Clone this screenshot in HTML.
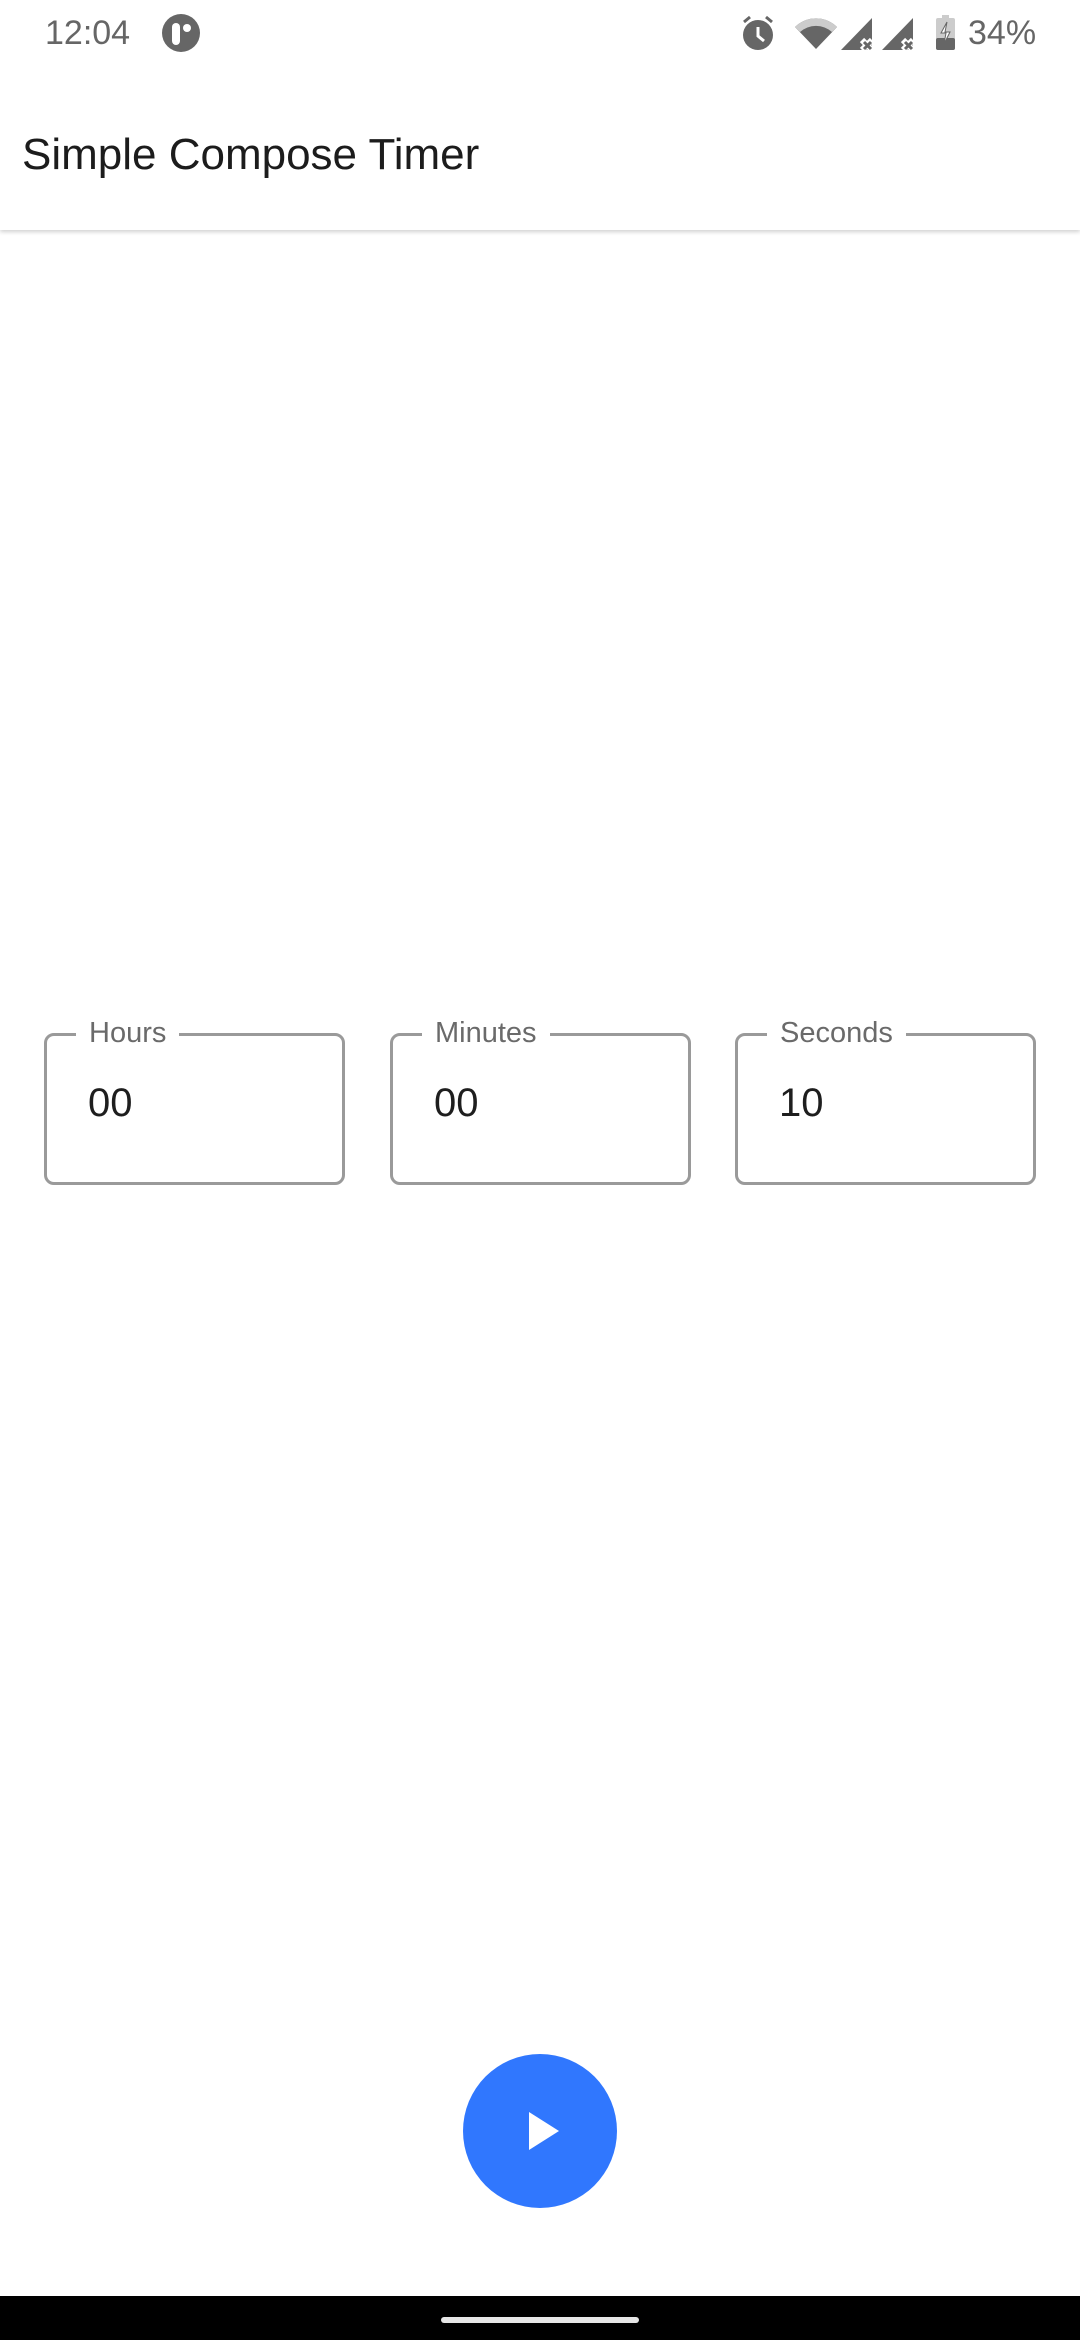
<!DOCTYPE html>
<html><head><meta charset="utf-8"><style>
html,body{margin:0;padding:0;width:1080px;height:2340px;background:#fff;overflow:hidden;font-family:"Liberation Sans",sans-serif;position:relative}
.abs{position:absolute}
.st{color:#666;font-size:34px;top:15px;line-height:36px}
.bar{top:0;left:0;width:1080px;height:230px;background:#fff;box-shadow:0 2px 4px rgba(0,0,0,.18)}
.title{left:22px;top:130px;font-size:44px;color:#1c1c1c;line-height:50px}
.box{top:1033px;width:295px;height:146px;border:3px solid #9a9a9a;border-radius:10px}
.lbl{top:-21px;left:29px;background:#fff;padding:0 13px;font-size:29px;color:#6a6a6a;line-height:36px}
.val{top:44px;left:41px;font-size:40px;color:#1e1e1e;line-height:46px}
</style></head><body>
<div class="abs bar"></div>
<div class="abs st" style="left:45px">12:04</div>
<svg class="abs" style="left:162px;top:14px" width="38" height="38" viewBox="0 0 38 38"><circle cx="19" cy="19" r="19" fill="#666"/><rect x="10" y="9" width="8" height="22" rx="4" fill="#fff"/><circle cx="25" cy="14" r="4" fill="#fff"/></svg>
<svg class="abs" style="left:740px;top:14px" width="300" height="40" viewBox="740 14 300 40">
<circle cx="758" cy="35" r="15" fill="#666"/><path d="M758 27v9l6 5" stroke="#fff" stroke-width="3" fill="none"/><path d="M744 22l6-5M772 22l-6-5" stroke="#666" stroke-width="3"/>
<path d="M795 27a30 30 0 0 1 42 0l-21 22z" fill="#666"/><path d="M795 27a30 30 0 0 1 42 0l-5 5a24 24 0 0 0-32 0z" fill="#ccc"/>
<path d="M841 50l31-32v32z" fill="#666"/><path d="M862 40l10 10M872 40l-10 10" stroke="#fff" stroke-width="6"/><path d="M864 42l7 7M871 42l-7 7" stroke="#666" stroke-width="3"/>
<path d="M882 50l31-32v32z" fill="#666"/><path d="M903 40l10 10M913 40l-10 10" stroke="#fff" stroke-width="6"/><path d="M905 42l7 7M912 42l-7 7" stroke="#666" stroke-width="3"/>
<rect x="936" y="18" width="19" height="32" rx="2" fill="#ccc"/><rect x="942" y="15" width="7" height="4" fill="#ccc"/><rect x="936" y="38" width="19" height="12" rx="2" fill="#666"/><path d="M947 22l-6 11h5l-2 11 6-12h-5z" fill="#fff" stroke="#666" stroke-width="1"/>
</svg>
<div class="abs st" style="left:968px">34%</div>
<div class="abs title">Simple Compose Timer</div>
<div class="abs box" style="left:44px"><div class="abs lbl">Hours</div><div class="abs val">00</div></div>
<div class="abs box" style="left:390px"><div class="abs lbl">Minutes</div><div class="abs val">00</div></div>
<div class="abs box" style="left:735px"><div class="abs lbl">Seconds</div><div class="abs val">10</div></div>
<div class="abs" style="left:463px;top:2054px;width:154px;height:154px;border-radius:50%;background:#3077fe"></div>
<svg class="abs" style="left:529px;top:2112px" width="31" height="38" viewBox="0 0 31 38"><path d="M0 0L30 19L0 38z" fill="#fff"/></svg>
<div class="abs" style="left:0;top:2296px;width:1080px;height:44px;background:#000"></div>
<div class="abs" style="left:441px;top:2317px;width:198px;height:6px;border-radius:3px;background:#e6e6e6"></div>
</body></html>
